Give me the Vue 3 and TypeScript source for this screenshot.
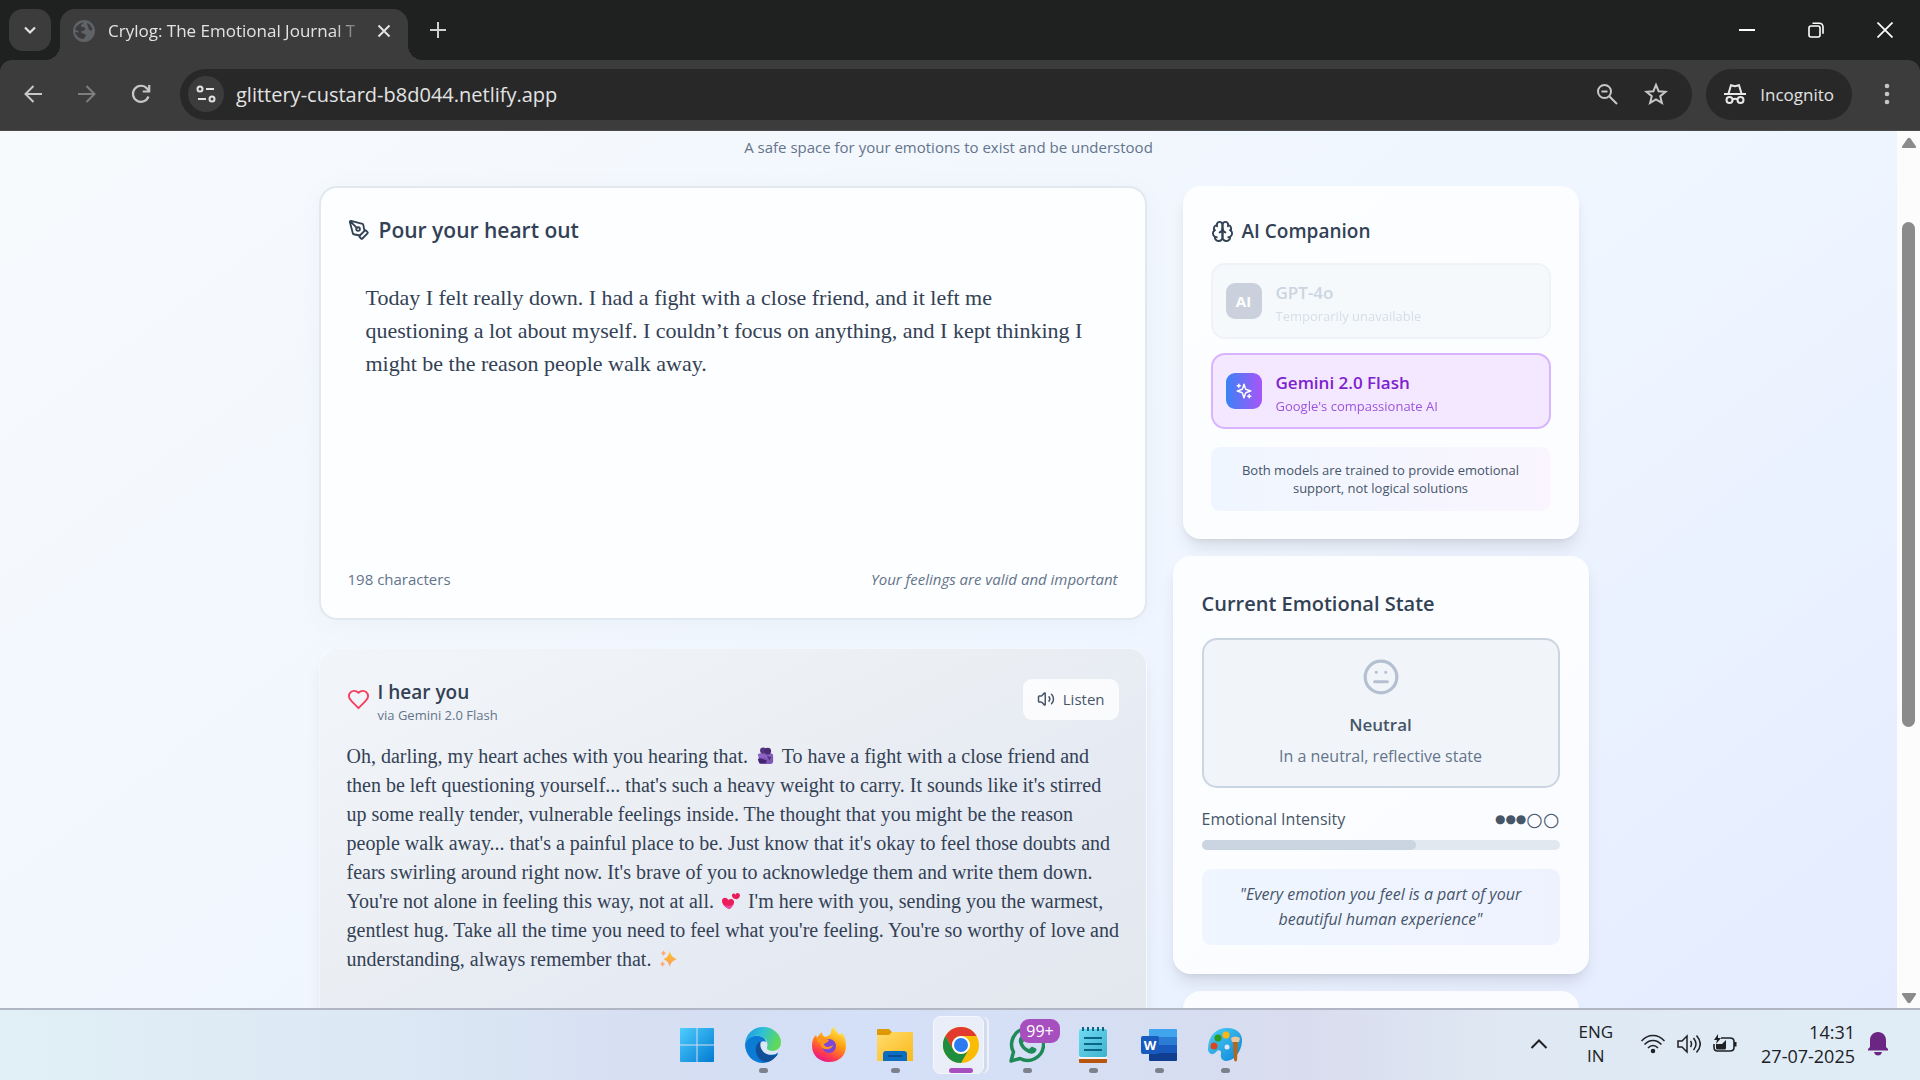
<script setup lang="ts">
import { ref, computed } from 'vue'

interface Model {
  id: string
  name: string
  note: string
  available: boolean
}

const models: Model[] = [
  { id: 'gpt', name: 'GPT-4o', note: 'Temporarily unavailable', available: false },
  { id: 'gemini', name: 'Gemini 2.0 Flash', note: "Google's compassionate AI", available: true },
]
const selected = ref('gemini')

const entry = ref(
  'Today I felt really down. I had a fight with a close friend, and it left me\n' +
    'questioning a lot about myself. I couldn’t focus on anything, and I kept thinking I\n' +
    'might be the reason people walk away.',
)
const characters = ref(198)
const intensity = ref(3)
const intensityWidth = computed(() => `${intensity.value * 20}%`)
</script>

<template>
  <div class="screen">
    <header class="browser">
      <div class="tabs">
        <button class="tab-search" aria-label="Search tabs">
          <svg width="14" height="14" viewBox="0 0 14 14"><path d="M2 4.5l5 5 5-5" fill="none" stroke="#e3e3e3" stroke-width="2.2" /></svg>
        </button>
        <div class="tab">
          <svg width="22" height="22" viewBox="0 0 22 22">
            <circle cx="11" cy="11" r="11" fill="#5f6368" />
            <path d="M2 9c2-4 5-6 9-7-1 2-3 2-3 4 1 2 3 0 4 2 1 3-3 2-4 4 1 2 4 1 5 3 0 2-2 2-2 4-5 0-8-3-9-7 2 0 3 1 4 0-1-2-3-1-4-3z" fill="#3c3c3c" />
            <path d="M14 3c3 1 5 4 5.500 7-2 1-4 0-4-2s-2-3-1.500-5z" fill="#3c3c3c" />
          </svg>
          <span class="tab-title">Crylog: The Emotional Journal T</span>
          <button class="plain" aria-label="Close tab">
            <svg width="14" height="14" viewBox="0 0 14 14"><path d="M1.500 1.500l11 11M12.500 1.500l-11 11" stroke="#e3e3e3" stroke-width="2" /></svg>
          </button>
        </div>
        <button class="plain new-tab" aria-label="New tab">
          <svg width="18" height="18" viewBox="0 0 18 18"><path d="M9 1v16M1 9h16" stroke="#d0d0d0" stroke-width="2" /></svg>
        </button>
        <div class="window-controls">
          <button class="plain" aria-label="Minimize"><svg width="16" height="16" viewBox="0 0 16 16"><path d="M0 8h16" stroke="#fff" stroke-width="2" /></svg></button>
          <button class="plain" aria-label="Restore">
            <svg width="16" height="16" viewBox="0 0 16 16" fill="none" stroke="#fff" stroke-width="1.6"><rect x="1" y="4" width="11" height="11" rx="2" /><path d="M4.500 1.200h7a3.500 3.500 0 0 1 3.500 3.500v7" /></svg>
          </button>
          <button class="plain" aria-label="Close"><svg width="16" height="16" viewBox="0 0 16 16"><path d="M.5.5l15 15M15.500.5l-15 15" stroke="#fff" stroke-width="1.700" /></svg></button>
        </div>
      </div>
      <div class="toolbar">
        <nav class="nav-buttons">
          <button class="plain" aria-label="Back"><svg width="20" height="20" viewBox="0 0 20 20" fill="none" stroke="#c7c7c7" stroke-width="2"><path d="M19 10H2.500M10.500 2l-8 8 8 8" /></svg></button>
          <button class="plain" aria-label="Forward"><svg width="20" height="20" viewBox="0 0 20 20" fill="none" stroke="#7d7d7d" stroke-width="2"><path d="M1 10h16.500M9.500 2l8 8-8 8" /></svg></button>
          <button class="plain" aria-label="Reload"><svg width="20" height="20" viewBox="0 0 20 20" fill="none" stroke="#c7c7c7" stroke-width="2.200"><path d="M17.500 12.500A8 8 0 1 1 16 4.500L18 7" /><path d="M18.200 1v6.500h-6.500" /></svg></button>
        </nav>
        <div class="address">
          <button class="site-info" aria-label="Site information">
            <svg width="20" height="20" viewBox="0 0 20 20" fill="none" stroke="#e3e3e3" stroke-width="2"><circle cx="4" cy="5" r="2.500" /><path d="M10 5h8M2 15h8" /><circle cx="16" cy="15" r="2.500" /></svg>
          </button>
          <input class="url" aria-label="Address" value="glittery-custard-b8d044.netlify.app" />
          <button class="plain" aria-label="Zoom out"><svg width="22" height="22" viewBox="0 0 22 22" fill="none" stroke="#c7c7c7" stroke-width="2"><circle cx="8.500" cy="8.500" r="6.500" /><path d="M13.500 13.500l7.500 7.500M5.500 8.500h6" /></svg></button>
          <button class="plain" aria-label="Bookmark"><svg width="24" height="24" viewBox="0 0 24 24" fill="none" stroke="#c7c7c7" stroke-width="2"><path d="M12 2.800l2.600 6.400 6.900.5-5.300 4.500 1.700 6.700L12 17.300l-5.900 3.600 1.700-6.700-5.300-4.500 6.900-.5z" /></svg></button>
        </div>
        <div class="incognito">
          <svg width="22" height="22" viewBox="0 0 22 22" fill="none" stroke="#e8e8e8" stroke-width="2"><path d="M0 11h22M4.500 10.500L7 2.200l4 1 4-1 2.500 8.300M8.500 16.500q2.500-1.600 5 0" /><circle cx="5.500" cy="17" r="3" /><circle cx="16.500" cy="17" r="3" /></svg>
          <span>Incognito</span>
        </div>
        <button class="plain menu" aria-label="Menu"><svg width="6" height="22" viewBox="0 0 6 22" fill="#c7c7c7"><circle cx="3" cy="3" r="2.300" /><circle cx="3" cy="11" r="2.300" /><circle cx="3" cy="19" r="2.300" /></svg></button>
      </div>
    </header>

    <div class="viewport">
      <main class="page">
        <p class="tagline">A safe space for your emotions to exist and be understood</p>
        <div class="columns">
          <div class="main-column">
            <section class="card journal">
              <h2 class="heading">
                <svg class="line-icon" width="22" height="22" viewBox="0 0 24 24">
                  <path d="M15.707 21.293a1 1 0 0 1-1.414 0l-1.586-1.586a1 1 0 0 1 0-1.414l5.586-5.586a1 1 0 0 1 1.414 0l1.586 1.586a1 1 0 0 1 0 1.414z" />
                  <path d="m18 13-1.375-6.874a1 1 0 0 0-.746-.776L3.235 2.028a1 1 0 0 0-1.207 1.207L5.350 15.879a1 1 0 0 0 .776.746L13 18M2.300 2.300l7.286 7.286" /><circle cx="11" cy="11" r="2" />
                </svg>
                <label for="entry">Pour your heart out</label>
              </h2>
              <textarea id="entry" v-model="entry" class="entry" spellcheck="false"></textarea>
              <div class="journal-footer">
                <span>{{ characters }} characters</span>
                <em>Your feelings are valid and important</em>
              </div>
            </section>

            <section class="response">
              <div class="response-head">
                <svg class="line-icon heart" width="23" height="23" viewBox="0 0 24 24"><path d="M19 14c1.490-1.460 3-3.210 3-5.500A5.500 5.500 0 0 0 16.500 3c-1.760 0-3 .5-4.500 2-1.500-1.500-2.740-2-4.500-2A5.500 5.500 0 0 0 2 8.500c0 2.300 1.500 4.050 3 5.500l7 7Z" /></svg>
                <div class="response-title">
                  <h3>I hear you</h3>
                  <p>via Gemini 2.0 Flash</p>
                </div>
                <button class="listen">
                  <svg class="line-icon" width="18" height="18" viewBox="0 0 24 24"><path d="M11 4.702a.705.705 0 0 0-1.203-.498L6.413 7.587A1.400 1.400 0 0 1 5.416 8H3a1 1 0 0 0-1 1v6a1 1 0 0 0 1 1h2.416a1.400 1.400 0 0 1 .997.413l3.383 3.384A.705.705 0 0 0 11 19.298zM16 9a5 5 0 0 1 0 6M19.364 18.364a9 9 0 0 0 0-12.728" /></svg>
                  Listen
                </button>
              </div>
              <p class="reply">
                Oh, darling, my heart aches with you hearing that.
                <svg class="emoji" viewBox="0 0 20 20" role="img" aria-label="people hugging">
                  <rect x="3" y="7" width="16" height="12" rx="3" fill="#7e57b5" />
                  <circle cx="8" cy="4" r="3.500" fill="#56337f" /><circle cx="13" cy="4.500" r="3.800" fill="#4b2a78" />
                  <path d="M2 8c3-2 5 0 8 1s6-1 8 1l-2 3c-3 1-5-2-8-1s-5 1-6-4z" fill="#8e63c4" />
                  <path d="M2 14c2-3 5-1 7 0l3 1-1 3H4z" fill="#452570" /><path d="M12 10l5 1-2 4z" fill="#51307c" />
                </svg>
                To have a fight with a close friend and<br />
                then be left questioning yourself... that's such a heavy weight to carry. It sounds like it's stirred<br />
                up some really tender, vulnerable feelings inside. The thought that you might be the reason<br />
                people walk away... that's a painful place to be. Just know that it's okay to feel those doubts and<br />
                fears swirling around right now. It's brave of you to acknowledge them and write them down.<br />
                You're not alone in feeling this way, not at all.
                <svg class="emoji" viewBox="0 0 20 20" role="img" aria-label="two hearts">
                  <path d="M8 19C3 17 0 13 0 10c0-4 5-5 7-1 3-3 8 0 6 4-1 3-3 5-5 6z" fill="#ec1c5b" />
                  <path d="M16 8c-3 0-5-2-5-4 0-3 3-3 4-1 1-3 5-2 5 1 0 2-2 4-4 4z" fill="#ec1c5b" />
                  <path d="M8 19c-3-1-5-3-6-5 3 2 7 2 11-1-1 3-3 5-5 6z" fill="#f0489f" />
                </svg>
                I'm here with you, sending you the warmest,<br />
                gentlest hug. Take all the time you need to feel what you're feeling. You're so worthy of love and<br />
                understanding, always remember that.
                <svg class="emoji" viewBox="0 0 20 20" role="img" aria-label="sparkles">
                  <defs><linearGradient id="spark" x1="0" y1="0" x2="0" y2="1"><stop offset="0" stop-color="#fcc419" /><stop offset="1" stop-color="#ff9a6b" /></linearGradient></defs>
                  <path d="M12 1c1 5 3 7 8 9-5 2-7 4-8 9-1-5-3-7-7-9 4-2 6-4 7-9z" fill="url(#spark)" />
                  <path d="M5 0c.5 2 1.500 3 3 3.500-1.500.5-2.500 1.500-3 3.500-.5-2-1.500-3-3-3.500C3.500 3 4.500 2 5 0zM4 12c.5 2 1.500 3 3 3.500-1.500.5-2.500 1.500-3 3.500-.5-2-1.500-3-3-3.500C2.500 15 3.500 14 4 12z" fill="#ffab70" />
                </svg>
              </p>
            </section>
          </div>

          <aside class="side-column">
            <section class="card panel">
              <h3 class="panel-title">
                <svg class="line-icon" width="23" height="23" viewBox="0 0 24 24">
                  <path d="M12 5a3 3 0 1 0-5.997.125 4 4 0 0 0-2.526 5.770 4 4 0 0 0 .556 6.588A4 4 0 1 0 12 18Z" /><path d="M12 5a3 3 0 1 1 5.997.125 4 4 0 0 1 2.526 5.770 4 4 0 0 1-.556 6.588A4 4 0 1 1 12 18Z" />
                  <path d="M15 13a4.500 4.500 0 0 1-3-4 4.500 4.500 0 0 1-3 4M17.599 6.500a3 3 0 0 0 .399-1.375M6.003 5.125A3 3 0 0 0 6.401 6.500M3.477 10.896a4 4 0 0 1 .585-.396M19.938 10.500a4 4 0 0 1 .585.396M6 18a4 4 0 0 1-1.967-.516M19.967 17.484A4 4 0 0 1 18 18" />
                </svg>
                AI Companion
              </h3>
              <div class="models">
                <button
                  v-for="model in models"
                  :key="model.id"
                  class="model"
                  :class="{ chosen: selected === model.id }"
                  :disabled="!model.available"
                  @click="selected = model.id"
                >
                  <span class="model-badge">
                    <svg v-if="model.available" class="line-icon" width="18" height="18" viewBox="0 0 24 24"><path d="m12 3-1.912 5.813a2 2 0 0 1-1.275 1.275L3 12l5.813 1.912a2 2 0 0 1 1.275 1.275L12 21l1.912-5.813a2 2 0 0 1 1.275-1.275L21 12l-5.813-1.912a2 2 0 0 1-1.275-1.275L12 3ZM5 3v4M19 17v4M3 5h4M17 19h4" /></svg>
                    <template v-else>AI</template>
                  </span>
                  <span class="model-text">
                    <strong>{{ model.name }}</strong>
                    <small>{{ model.note }}</small>
                  </span>
                </button>
              </div>
              <p class="models-note">Both models are trained to provide emotional<br />support, not logical solutions</p>
            </section>

            <section class="card panel mood">
              <h3 class="panel-title">Current Emotional State</h3>
              <div class="state">
                <svg class="line-icon" width="38" height="38" viewBox="0 0 24 24"><circle cx="12" cy="12" r="10" /><path d="M8 15h8M9 9h.01M15 9h.01" /></svg>
                <strong>Neutral</strong>
                <span>In a neutral, reflective state</span>
              </div>
              <div class="intensity">
                <span>Emotional Intensity</span>
                <span class="pips"><span class="full">●●●</span><span class="open">○○</span></span>
              </div>
              <div class="meter"><div class="meter-fill" :style="{ width: intensityWidth }"></div></div>
              <p class="quote">"Every emotion you feel is a part of your<br />beautiful human experience"</p>
            </section>

            <section class="card panel next"></section>
          </aside>
        </div>
      </main>
      <div class="scrollbar">
        <svg width="16" height="12" viewBox="0 0 16 12"><path d="M6.500 1.500q1.500-1.500 3 0l5.500 8q.5 1.500-1 1.500H2q-1.500 0-1-1.500z" fill="#8b8b8b" /></svg>
        <div class="track"><div class="thumb"></div></div>
        <svg width="16" height="12" viewBox="0 0 16 12"><path d="M6.500 10.500q1.500 1.500 3 0l5.500-8q.5-1.500-1-1.500H2q-1.500 0-1 1.500z" fill="#8b8b8b" /></svg>
      </div>
    </div>

    <footer class="taskbar">
      <div class="apps">
        <button class="app" aria-label="Start">
          <svg width="36" height="36" viewBox="0 0 36 36">
            <defs><linearGradient id="win" gradientUnits="userSpaceOnUse" x1="0" y1="0" x2="36" y2="36"><stop offset="0" stop-color="#4fd0ff" /><stop offset="1" stop-color="#0078d0" /></linearGradient></defs>
            <path d="M2 1h15.500v16.500H1V2q0-1 1-1zM18.500 1H34q1 0 1 1v15.500H18.500zM1 18.500h16.500V35H2q-1 0-1-1zM18.500 18.500H35V34q0 1-1 1H18.500z" fill="url(#win)" />
          </svg>
        </button>
        <button class="app running" aria-label="Edge">
          <svg width="36" height="36" viewBox="0 0 36 36">
            <defs><linearGradient id="edge" x1="0" y1="0" x2="1" y2="0.300"><stop offset="0" stop-color="#1c8fdf" /><stop offset=".5" stop-color="#2fc0d8" /><stop offset="1" stop-color="#5fd95a" /></linearGradient></defs>
            <path d="M0 17C3 9 9 8 14 9c7 1 8 6 6 10 0 4 4 7 9 6l4 1c-3 6-9 10-15 10C8 36 0 28 0 17z" fill="#0c7bd6" />
            <path d="M0 17C1 6 9 0 18 0c11 0 18 8 18 15 0 6-4 9-9 9-4 0-6-2-5-4 2-5-2-10-8-11C8 8 2 12 0 17z" fill="url(#edge)" />
            <path d="M14 15c-7 6-2 19 7 20 5 0 9-4 12-8-7 3-14 0-16-5-1-3 0-5 1-7z" fill="#10509b" />
            <path d="M16 15c4-2 7 1 6 5-1 3 2 4 5 4 2 0 4 0 6-1-1 2-1 3-2 4-6 2-12 0-14-4-2-3-2-6-1-8z" fill="#dde7f7" />
          </svg>
        </button>
        <button class="app" aria-label="Firefox">
          <svg width="36" height="36" viewBox="0 0 36 36">
            <defs><linearGradient id="fox" x1=".8" y1="0" x2=".3" y2="1"><stop offset="0" stop-color="#fff44f" /><stop offset=".45" stop-color="#ff980e" /><stop offset=".8" stop-color="#ff3750" /><stop offset="1" stop-color="#e01890" /></linearGradient></defs>
            <path d="M23 0c1 4 4 6 6 8 2-1 1-3 1-3 4 4 5 9 5 14 0 10-7 16-17 16C8 35 1 28 1 19c0-5 1-8 4-11l1 3c1-2 3-4 5-6 0 3 1 4 3 5 3-1 6-2 6-5 0-2 1-4 3-5z" fill="url(#fox)" />
            <circle cx="18" cy="19" r="7" fill="#7d45d8" />
            <path d="M5 11c6-2 9 1 13 2-1 3-5 3-5 5 2 3 6 2 9 0-1 5-10 6-12 1-1-3-4-4-5-8z" fill="#ff9420" />
          </svg>
        </button>
        <button class="app running" aria-label="File Explorer">
          <svg width="36" height="36" viewBox="0 0 36 36">
            <defs><linearGradient id="folder" x1="0" y1="0" x2="1" y2="1"><stop offset="0" stop-color="#ffdc6e" /><stop offset="1" stop-color="#fcb91a" /></linearGradient></defs>
            <path d="M0 3q0-1 1-1h11l3 3v4H0z" fill="#dd9a05" /><path d="M0 8h12l3-3h20q1 0 1 1v28H0z" fill="url(#folder)" />
            <path d="M6 34V27q0-3 3-3h18q3 0 3 3v7z" fill="#0c6dc0" /><path d="M11 29h14" stroke="#0a4f94" stroke-width="2" />
          </svg>
        </button>
        <button class="app active" aria-label="Chrome">
          <svg width="36" height="36" viewBox="0 0 36 36">
            <circle cx="18" cy="18" r="18" fill="#fbbc05" />
            <path d="M2.400 9A18 18 0 0 1 33.600 9H18a9 9 0 0 0-7.800 13.500z" fill="#e23a2e" />
            <path d="M2.400 9A18 18 0 0 0 18 36l7.800-13.500a9 9 0 0 1-15.600 0z" fill="#1e8e3e" />
            <circle cx="18" cy="18" r="9" fill="#fff" /><circle cx="18" cy="18" r="7" fill="#2d7bf0" />
          </svg>
        </button>
        <button class="app running" aria-label="WhatsApp">
          <svg width="36" height="36" viewBox="0 0 36 36">
            <path d="M2 34l2.500-9A16 16 0 1 1 11 31.500z" fill="none" stroke="#1e8a57" stroke-width="3.500" stroke-linejoin="round" />
            <path d="M10 12c2-5 4-3 5-1 1 3 0 3-1 5 1 3 3 5 6 6 2-1 2-3 4-2 4 2 4 2 3 4-2 4-7 3-11 0-4-3-7-8-6-12z" fill="#1e8a57" />
          </svg>
          <span class="count">99+</span>
        </button>
        <button class="app running" aria-label="Notepad">
          <svg width="30" height="36" viewBox="0 0 30 36">
            <defs><linearGradient id="note" x1="0" y1="0" x2="1" y2="1"><stop offset="0" stop-color="#6fdcf2" /><stop offset="1" stop-color="#3fb0cc" /></linearGradient></defs>
            <rect x="1" y="29" width="28" height="7" rx="1" fill="#b8560f" /><rect x="1" y="28" width="28" height="4" fill="#f4f4f4" /><rect x="1" y="2" width="28" height="28" rx="2" fill="url(#note)" />
            <path d="M5 0v4M10 0v4M15 0v4M20 0v4M25 0v4M6 11h18M6 17h18M6 23h18" stroke="#0b6586" stroke-width="2" />
          </svg>
        </button>
        <button class="app running" aria-label="Word">
          <svg width="36" height="36" viewBox="0 0 36 36">
            <path d="M9 2h26q1 0 1 1v7H8V3q0-1 1-1z" fill="#41a5ee" /><path d="M8 10h28v8H8z" fill="#2b7cd3" /><path d="M8 18h28v8H8z" fill="#185abd" /><path d="M8 26h28v7q0 1-1 1H9q-1 0-1-1z" fill="#103f91" />
            <rect y="9" width="18" height="18" rx="2" fill="#185abd" />
            <text x="9" y="23" text-anchor="middle" fill="#fff" font-size="13" font-weight="700" font-family="Open Sans, sans-serif">W</text>
          </svg>
        </button>
        <button class="app running" aria-label="Paint">
          <svg width="36" height="36" viewBox="0 0 36 36">
            <defs><linearGradient id="paint" x1="0" y1="0" x2="1" y2="1"><stop offset="0" stop-color="#4ed0f5" /><stop offset="1" stop-color="#0a84d6" /></linearGradient></defs>
            <path d="M1 22C1 8 10 1 20 1s16 6 15 14c-1 10-8 19-16 19-4 0-6-4-5-7 1-4-3-5-5-2-3 4-8 2-8-3z" fill="url(#paint)" />
            <circle cx="11" cy="11" r="3.500" fill="#2c9a1b" /><circle cx="19" cy="8" r="3.500" fill="#fdb813" /><circle cx="7" cy="19" r="3.500" fill="#d8481e" /><circle cx="20" cy="20" r="2.500" fill="#dfe8f6" />
            <path d="M24 11q4-3 9 0l-1 4h-7z" fill="#eec59a" /><path d="M26 15h5l-1 18q-1 3-3 0z" fill="#b3671c" />
          </svg>
        </button>
      </div>
      <div class="tray">
        <button class="plain" aria-label="Show hidden icons"><svg width="18" height="12" viewBox="0 0 18 12"><path d="M1.500 10L9 2.500l7.500 7.500" fill="none" stroke="#202124" stroke-width="2" /></svg></button>
        <span class="language">ENG<br />IN</span>
        <div class="status">
          <svg width="24" height="20" viewBox="0 0 24 20" fill="none" stroke="#202124" stroke-width="1.500"><path d="M.5 7C7-.5 17-.5 23.500 7M3.500 10.500c5-5.500 12-5.500 17 0M7 14c3-3.500 7-3.500 10 0" /><circle cx="12" cy="17" r="1.500" fill="#202124" /></svg>
          <svg width="24" height="20" viewBox="0 0 24 20" fill="none" stroke="#202124" stroke-width="1.500"><path d="M1 7h4l5-5v16l-5-5H1zM13.500 7q2 3 0 6M16.500 4q5 6 0 12M19.500 1.500q7.500 8.500 0 17" /></svg>
          <svg width="24" height="20" viewBox="0 0 24 20" fill="none" stroke="#202124" stroke-width="1.600"><path d="M8 4h9q4 0 4 3.500v6q0 3.500-4 3.500H4.500Q1 17 1 13.500V10" /><path d="M3 10h6l4-4v8q0 1.500-1.500 1.500h-7Q3 15.500 3 14zM5 0L1 6h3l-1 4 5-6H5zM21 8h2.500v4.500H21z" fill="#202124" stroke="none" /></svg>
        </div>
        <span class="clock">14:31<br />27-07-2025</span>
        <svg width="20" height="24" viewBox="0 0 20 24" fill="#6b2582"><path d="M10 0c5 0 8 4 8 8v7l2 2v1.500H0V17l2-2V8c0-4 3-8 8-8zM6 20h8q-1 3.500-4 3.500T6 20z" /></svg>
      </div>
    </footer>
  </div>
</template>

<style>
html,
body {
  margin: 0;
  overflow: hidden;
}
</style>

<style scoped>
* {
  box-sizing: border-box;
}
.screen {
  display: flex;
  flex-direction: column;
  height: 100vh;
  font-family: 'Open Sans', 'Noto Sans', sans-serif;
  color: #334155;
}
h2,
h3,
p {
  margin: 0;
}
button,
input,
textarea {
  font: inherit;
  color: inherit;
  border: 0;
  padding: 0;
  background: none;
}
svg {
  display: block;
  flex: none;
}
.plain {
  display: flex;
  align-items: center;
  justify-content: center;
}
.line-icon {
  fill: none;
  stroke: currentColor;
  stroke-width: 2;
  stroke-linecap: round;
  stroke-linejoin: round;
}

/* Browser window */
.browser {
  background: #1f2120;
  color: #e3e3e3;
}
.tabs {
  display: flex;
  align-items: center;
  height: 60px;
  padding-left: 9px;
}
.tab-search {
  display: flex;
  align-items: center;
  justify-content: center;
  width: 42px;
  height: 42px;
  border-radius: 14px;
  background: #3c3c3c;
}
.tab {
  position: relative;
  display: flex;
  align-items: center;
  align-self: flex-end;
  width: 348px;
  height: 51px;
  margin-left: 9px;
  padding: 0 17px 8px 13px;
  border-radius: 15px 15px 0 0;
  background: #3c3c3c;
}
.tab::before,
.tab::after {
  content: '';
  position: absolute;
  bottom: 0;
  width: 15px;
  height: 15px;
}
.tab::before {
  right: 100%;
  background: radial-gradient(circle at 0 0, transparent 15px, #3c3c3c 15px);
}
.tab::after {
  left: 100%;
  background: radial-gradient(circle at 100% 0, transparent 15px, #3c3c3c 15px);
}
.tab-title {
  flex: 1;
  margin-left: 13px;
  white-space: nowrap;
  font-size: 17px;
  mask-image: linear-gradient(90deg, #000 84%, transparent 96%);
}
.new-tab {
  margin-left: 21px;
}
.window-controls {
  display: flex;
  gap: 53px;
  margin-left: auto;
  padding-right: 27px;
}
.toolbar {
  display: flex;
  align-items: center;
  height: 71px;
  padding: 0 30px 2px 23px;
  border-bottom: 1px solid #4a4a4a;
  border-radius: 12px 12px 0 0;
  background: #3c3c3c;
}
.nav-buttons {
  display: flex;
  gap: 34px;
}
.address {
  flex: 1;
  display: flex;
  align-items: center;
  gap: 26px;
  height: 51px;
  margin: 0 14px 0 29px;
  padding: 0 24px 0 8px;
  border-radius: 26px;
  background: #282828;
}
.site-info {
  display: flex;
  align-items: center;
  justify-content: center;
  width: 36px;
  height: 36px;
  border-radius: 18px;
  background: #3c3c3c;
}
.url {
  flex: 1;
  margin-left: -14px;
  outline: none;
  font-size: 20px;
}
.incognito {
  display: flex;
  align-items: center;
  gap: 14px;
  height: 51px;
  padding: 0 18px;
  border-radius: 26px;
  background: #282828;
  font-size: 17px;
}
.menu {
  margin-left: 32px;
}

/* Page area */
.viewport {
  flex: 1;
  display: flex;
  min-height: 0;
}
.page {
  flex: 1;
  overflow: hidden;
  background: linear-gradient(to bottom right, #f8fafc, #eff6ff 50%, #e0e7ff) 0 -118px / 100% 1436px no-repeat;
}
.tagline {
  margin: 4px 0 27px;
  text-align: center;
  font-size: 15px;
  line-height: 24px;
  color: #64748b;
}
.columns {
  display: grid;
  grid-template-columns: repeat(3, 1fr);
  gap: 36px;
  max-width: 1260px;
  margin: 0 auto;
}
.main-column {
  grid-column: span 2;
  display: flex;
  flex-direction: column;
  gap: 28px;
}
.side-column {
  display: flex;
  flex-direction: column;
  gap: 17px;
}
.card {
  border-radius: 18px;
  background: rgba(255, 255, 255, 0.8);
  box-shadow: 0 11px 17px -3px rgba(0, 0, 0, 0.1), 0 4px 7px -4px rgba(0, 0, 0, 0.1);
}
.journal {
  padding: 28px 27px;
  border: 2px solid #e2e8f0;
  background: #fdfeff;
  box-shadow: 0 4px 28px rgba(0, 0, 0, 0.03);
}
.heading {
  display: flex;
  align-items: center;
  gap: 9px;
  font-size: 21px;
  font-weight: 600;
  line-height: 28px;
}
.entry {
  display: block;
  width: 100%;
  height: 288px;
  margin: 19px 0 18px;
  padding: 18px;
  resize: none;
  outline: none;
  font-family: 'Liberation Serif', serif;
  font-size: 22px;
  line-height: 33px;
  overflow: hidden;
}
.journal-footer {
  display: flex;
  justify-content: space-between;
  margin-bottom: 1px;
  font-size: 15px;
  line-height: 20px;
  color: #64748b;
}
.response {
  padding: 29px 27px 72px;
  border: 1px solid rgba(255, 255, 255, 0.6);
  border-radius: 18px;
  background: linear-gradient(to bottom right, #f2f5f9, #ebeff3 40%, #e6eaf3 60%, #e3e8ef);
  box-shadow: 0 11px 17px -3px rgba(0, 0, 0, 0.08);
}
.response-head {
  display: flex;
  align-items: center;
  height: 42px;
}
.heart {
  color: #f43f5e;
}
.response-title {
  flex: 1;
  margin-left: 8px;
  padding-top: 6px;
}
.response-title h3 {
  font-size: 19px;
  font-weight: 600;
  line-height: 26px;
}
.response-title p {
  font-size: 13px;
  line-height: 20px;
  color: #64748b;
}
.listen {
  display: flex;
  align-items: center;
  gap: 8px;
  height: 41px;
  padding: 0 14px;
  border-radius: 9px;
  background: rgba(255, 255, 255, 0.8);
  font-size: 15px;
  color: #475569;
}
.reply {
  margin-top: 22px;
  font-family: 'Liberation Serif', serif;
  font-size: 20px;
  line-height: 29px;
  white-space: nowrap;
}
.emoji {
  display: inline-block;
  width: 20px;
  height: 18px;
  margin: 0 2px;
  vertical-align: -2px;
}

/* Side panels */
.panel {
  padding: 28px;
}
.panel-title {
  display: flex;
  align-items: center;
  gap: 8px;
  margin-bottom: 15px;
  font-size: 19px;
  font-weight: 600;
  line-height: 34px;
}
.models {
  display: flex;
  flex-direction: column;
  gap: 14px;
}
.model {
  display: flex;
  align-items: center;
  gap: 14px;
  height: 76px;
  padding: 0 13px;
  border: 2px solid #e2e8f0;
  border-radius: 14px;
  background: #f1f5f9;
  text-align: left;
}
.model:disabled {
  border-color: #eff2f7;
  background: #f6f9fc;
  color: #cbd5e1;
}
.model.chosen {
  border-color: #d8b4fe;
  background: #f3e8ff;
  color: #7e22ce;
}
.model-badge {
  display: flex;
  align-items: center;
  justify-content: center;
  width: 36px;
  height: 36px;
  border-radius: 9px;
  background: #cad1dd;
  color: #fff;
  font-size: 15px;
  font-weight: 700;
}
.chosen .model-badge {
  background: linear-gradient(90deg, #3b82f6, #a855f7);
}
.model-text {
  display: flex;
  flex-direction: column;
  padding-top: 3px;
}
.model-text strong {
  font-size: 17px;
  font-weight: 600;
  line-height: 26px;
}
.model-text small {
  font-size: 13px;
  line-height: 20px;
  opacity: 0.75;
}
.models-note {
  margin-top: 18px;
  padding: 14px;
  border-radius: 9px;
  background: linear-gradient(90deg, #eff6ff, #faf5ff);
  text-align: center;
  font-size: 13px;
  line-height: 18px;
  color: #475569;
}
.mood {
  margin: 0 -10px;
  padding: 29px;
}
.mood .panel-title {
  font-size: 20px;
  line-height: 38px;
}
.state {
  display: flex;
  flex-direction: column;
  align-items: center;
  padding: 18px;
  border: 2px solid #cbd5e1;
  border-radius: 15px;
  background: #f1f5f9;
  color: #64748b;
}
.state svg {
  margin-bottom: 15px;
  color: #b4c0d1;
}
.state strong {
  margin-bottom: 5px;
  font-size: 17px;
  font-weight: 600;
  line-height: 28px;
  color: #475569;
}
.state span {
  font-size: 16px;
  line-height: 24px;
}
.intensity {
  display: flex;
  justify-content: space-between;
  margin: 19px 0 9px;
  font-size: 16px;
  line-height: 24px;
  color: #475569;
}
.pips {
  display: flex;
  font-family: 'DejaVu Sans', sans-serif;
}
.full {
  font-size: 12px;
}
.open {
  font-size: 19px;
}
.meter {
  height: 10px;
  border-radius: 5px;
  background: #e2e8f0;
}
.meter-fill {
  height: 10px;
  border-radius: 5px;
  background: #cbd5e1;
}
.quote {
  margin-top: 19px;
  padding: 13px;
  border-radius: 9px;
  background: linear-gradient(90deg, #eff6ff, #eef2ff);
  text-align: center;
  font-size: 16px;
  font-style: italic;
  line-height: 25px;
  color: #475569;
}
.next {
  min-height: 200px;
}

/* Scrollbar */
.scrollbar {
  display: flex;
  flex-direction: column;
  align-items: center;
  width: 23px;
  padding: 6px 0 4px;
  background: #fcfcfc;
}
.track {
  flex: 1;
  padding-top: 73px;
}
.thumb {
  width: 13px;
  height: 61%;
  min-height: 505px;
  border-radius: 7px;
  background: #8b8b8b;
}

/* Taskbar */
.taskbar {
  position: relative;
  display: flex;
  align-items: center;
  justify-content: center;
  height: 72px;
  padding-left: 2px;
  border-top: 2px solid #b0b6c3;
  background: linear-gradient(90deg, #e1eff6, #dce8f4 20%, #d5def2 36%, #d4e0f8 45%, #d6def2 60%, #d9dcee 68%, #dfe8f3 78%, #e0edf6);
}
.apps {
  display: flex;
}
.app {
  position: relative;
  display: flex;
  align-items: center;
  justify-content: center;
  width: 66px;
  height: 58px;
}
.app svg {
  position: relative;
}
.running::after,
.active::after {
  content: '';
  position: absolute;
  bottom: 1px;
  width: 9px;
  height: 5px;
  border-radius: 3px;
  background: #7d818b;
}
.active::after {
  width: 24px;
  background: #a84fc0;
}
.active::before {
  content: '';
  position: absolute;
  inset: 0 10px 0 5px;
  border: 1px solid #f3f6fc;
  border-radius: 7px;
  background: #e9eef9;
  box-shadow: 4px 0 0 -1px #d3daea, 6px 0 0 -1px #eef2fa;
}
.count {
  position: absolute;
  top: 3px;
  left: 26px;
  width: 40px;
  height: 24px;
  border-radius: 9px;
  background: #a84fc0;
  color: #fff;
  font-size: 16px;
  line-height: 24px;
  text-align: center;
}
.tray {
  position: absolute;
  right: 32px;
  display: flex;
  align-items: center;
  padding-bottom: 3px;
  font-size: 17px;
  line-height: 24px;
  color: #202124;
}
.language {
  margin: 0 28px 0 30px;
  text-align: center;
}
.status {
  display: flex;
  gap: 12px;
  margin-right: 24px;
}
.clock {
  margin-right: 13px;
  font-size: 18px;
  text-align: right;
}
</style>
